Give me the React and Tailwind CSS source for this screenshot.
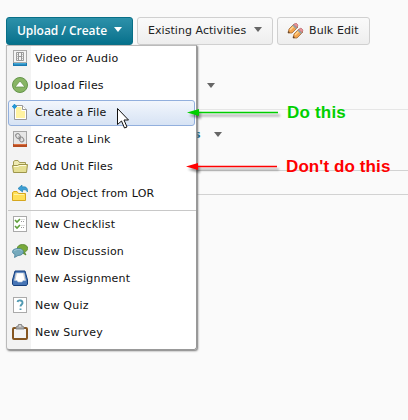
import React from "react";

function Caret({ className }) {
  return (
    <svg width="8" height="5" viewBox="0 0 8 5" className={className}>
      <path d="M0 0H8L4 5Z" fill="currentColor" />
    </svg>
  );
}

const icons = {
  video: (
    <>
      <rect x="1.5" y=".5" width="13" height="12" fill="#f5f5f5" stroke="#aaa" />
      <path d="M4.5 2.5H11.5V10.5H4.500ZM6.500 2.500V10.500M9.500 2.500V10.500M6.500 6.500H9.500" fill="none" stroke="#999" />
      <path d="M4 4.500H6M4 6.500H6M4 8.500H6M10 4.500H12M10 6.500H12M10 8.500H12" stroke="#aaa" strokeWidth=".7" />
      <path d="M1 13H15V16H1Z" fill="#1878b0" />
      <path d="M2 13H14V14.5H2Z" fill="#43a8d8" />
    </>
  ),
  upload: (
    <>
      <circle cx="8" cy="8" r="7.5" fill="#88b564" stroke="#64944a" />
      <path d="M8 4L13 10H3Z" fill="#fff" stroke="#5f8d43" strokeWidth=".7" />
    </>
  ),
  file: (
    <>
      <path d="M2.500 1.500H10.500L14.500 5.500V15.500H2.500Z" fill="#fff" stroke="#999" />
      <path d="M4 3H9.500V7H13V14H4Z" fill="#fff3a2" />
      <path d="M10.500 1.500V5.500H14.500" fill="#fff" stroke="#999" />
      <path d="M2.500 0V5M0 2.500H5M1 1L4 4M4 1L1 4" stroke="#2696d5" strokeWidth="1.100" />
    </>
  ),
  link: (
    <>
      <rect x="1.500" y=".500" width="13" height="13" fill="#e6e6e6" stroke="#a5a5a5" />
      <g fill="none" stroke="#8f8f8f" strokeWidth="1.100">
        <rect x="4" y="2.500" width="4" height="5" rx="2" transform="rotate(-35 6 5)" />
        <rect x="7.500" y="6" width="4" height="5" rx="2" transform="rotate(-35 9.500 8.500)" />
        <path d="M6.500 5.500L9 8.500" />
      </g>
      <path d="M1 13H15V16H1Z" fill="#b64c20" />
      <path d="M2 13H14V14H2Z" fill="#dc7142" />
    </>
  ),
  folder: (
    <>
      <path d="M1.500 13.500V3.500L3 2.500H6L7.500 4.500H13.500V7.500" fill="#eeeab2" stroke="#a39b55" />
      <path d="M.500 7.500H5.500L7 6.500H15.500L14.500 14.500H1.500Z" fill="#e5df92" stroke="#9d954b" />
      <path d="M2 8.500H6L7.500 7.500H14" stroke="#fffce0" fill="none" />
    </>
  ),
  object: (
    <>
      <path d="M.500 15.500V7.500L2 6.500H5L6.500 8.500H13.500V15.500Z" fill="#ffdf58" stroke="#d6a71e" />
      <path d="M2 9.500H12" stroke="#fff3a5" />
      <path d="M6 3.500L10 0V2C14 1 16 3 15.500 7C14 4.500 13 4.500 10.500 5V7Z" fill="#3d9fd4" stroke="#1478ae" strokeWidth=".6" />
    </>
  ),
  checklist: (
    <>
      <rect x="1.500" y=".500" width="13" height="15" fill="#fff" stroke="#aaa" />
      <path d="M3 4L5 6L8 3M3 10L5 12L8 9" fill="none" stroke="#609f3b" strokeWidth="1.600" />
      <path d="M9 5.500H13M9 11.500H13" stroke="#999" strokeDasharray="1 1" />
      <path d="M9 3.500H13M9 9.500H13" stroke="#ddd" />
    </>
  ),
  discussion: (
    <>
      <path d="M12.500 9L14 12L9.500 9.500C3.500 8.500 4 1.500 10.500 1.500C17 1.500 17 8 12.500 9Z" fill="#78a83a" stroke="#51832a" strokeWidth=".8" />
      <path d="M3 11.500L2.500 14.500L6 12.500C13 12.500 13 5.500 6.500 5.500C0 5.500-1.500 9.500 3 11.500Z" fill="#76aabd" stroke="#467f98" strokeWidth=".8" />
      <path d="M2 8C4 6 9 6 10.500 8" stroke="#a1c9d7" fill="none" />
    </>
  ),
  assignment: (
    <>
      <path d="M3 1H13L15.500 10V14L14.500 15.500H1.500L.500 14V10Z" fill="#4775b6" stroke="#153f7c" />
      <path d="M4 3H12L13.500 10.500H11L10 12H6L5 10.500H2.500Z" fill="#fff" stroke="#b9c9dc" strokeWidth=".6" />
      <path d="M4.500 3L3 10M11.500 3L13 10" stroke="#ccc" />
    </>
  ),
  quiz: (
    <>
      <rect x="1.500" y=".500" width="13" height="15" fill="#fff" stroke="#aaa" />
      <path d="M5.500 5C6 2.500 11 3 10.500 6C10.300 7.500 8.500 7.500 8.500 9.500M8.500 11.500V13" fill="none" stroke="#519ab2" strokeWidth="1.900" />
    </>
  ),
  survey: (
    <>
      <rect x="1" y="4" width="14" height="11" rx="1" fill="#f4f4f4" stroke="#865620" strokeWidth="2" />
      <path d="M4 5V3L6 2L6.500 .500H9.500L10 2L12 3V5Z" fill="#aaa" stroke="#777" strokeWidth=".8" />
      <circle cx="8" cy="2" r=".8" fill="#fff" />
    </>
  ),
};

const groupOne = [
  ["video", "Video or Audio"],
  ["upload", "Upload Files"],
  ["file", "Create a File"],
  ["link", "Create a Link"],
  ["folder", "Add Unit Files"],
  ["object", "Add Object from LOR"],
];
const groupTwo = [
  ["checklist", "New Checklist"],
  ["discussion", "New Discussion"],
  ["assignment", "New Assignment"],
  ["quiz", "New Quiz"],
  ["survey", "New Survey"],
];

function MenuItem({ icon, label, active }) {
  return (
    <li className={`flex h-[27px] pt-[4px] pl-[5px] ${active ? "relative before:absolute before:top-0 before:left-px before:h-[26px] before:w-[187px] before:rounded-[3px] before:border before:border-[#92afdd] before:bg-linear-to-b before:from-[#f2f6fc] before:to-[#d7e3f4]" : ""}`}>
      <svg width="16" height="16" viewBox="0 0 16 16" className="relative shrink-0">{icons[icon]}</svg>
      <span className="relative ml-[7px] leading-[17px] whitespace-nowrap tracking-[0.22px]">{label}</span>
    </li>
  );
}

function Pencils() {
  return (
    <svg width="17" height="17" viewBox="0 0 17 17" className="shrink-0">
      {["translate(0 0)", "translate(5 5)"].map((t) => (
        <g key={t} transform={t}>
          <path d="M1 10L2 6L7 1L11 4L5 10Z" fill="#f4a44d" stroke="#a16a38" strokeWidth=".8" />
          <path d="M3 7L8 2" stroke="#ffd690" strokeWidth="1.400" />
          <path d="M6.500 1.500L9 0L11 2L10 4.500Z" fill="#e99297" stroke="#b76a70" strokeWidth=".7" />
          <path d="M6 2L9.500 5.500" stroke="#8d9eaa" strokeWidth="1.600" />
          <path d="M1 10L1.500 8L3 9.500Z" fill="#493626" />
        </g>
      ))}
    </svg>
  );
}

function Arrow({ color, className }) {
  return (
    <svg width="98" height="16" viewBox="0 0 98 16" className={`drop-shadow-[2px_3px_1px_rgba(0,0,0,0.4)] ${className}`}>
      <path d="M9 4.500H91" stroke={color} strokeWidth="1.600" />
      <path d="M0 4.500L12 1V8Z" fill={color} />
    </svg>
  );
}

export default function App() {
  return (
    <div className="relative h-[420px] w-[408px] overflow-hidden bg-[#fafafa] font-['DejaVu_Sans',sans-serif] text-[11px] text-[#222]">
      <div className="flex gap-1 pt-[17px] pl-[6px]">
        <button className="flex h-7 w-[127px] items-center rounded-[3px] border border-[#086f87] bg-linear-to-b from-[#2c91aa] to-[#04718c] pl-[10px] font-['Open_Sans',sans-serif] text-[12px] font-semibold text-white">
          <span className="w-[97px] text-left leading-[16px] whitespace-nowrap tracking-[-0.04px]">Upload / Create</span>
          <Caret className="mb-[3px]" />
        </button>
        <button className="flex h-7 w-[136px] items-center rounded-[3px] border border-[#d0d0d0] bg-linear-to-b from-[#fafafa] to-[#eee] pl-[10px]">
          <span className="w-[106px] text-left leading-[16px] whitespace-nowrap tracking-[0.05px]">Existing Activities</span>
          <Caret className="mb-[3px] text-[#666]" />
        </button>
        <button className="flex h-7 w-[93px] items-center gap-[5px] rounded-[3px] border border-[#d0d0d0] bg-linear-to-b from-[#fafafa] to-[#eee] pl-[9px]">
          <Pencils />
          <span className="leading-[16px] whitespace-nowrap tracking-[0.1px]">Bulk Edit</span>
        </button>
      </div>

      <main className="pl-[190px]">
        <div className="flex h-[65px] items-center border-b border-[#e6e6e6] pt-[17px] pl-[17px] text-[#666]"><Caret /></div>
        <div className="flex h-[61px] items-start border-b border-[#d2d2d2] pt-[17px] pl-[4px]">
          <b className="w-[20px] text-[#176783]">s</b>
          <Caret className="mt-[5px] text-[#666]" />
        </div>
        <div className="h-[24px] border-b border-[#d2d2d2]" />
      </main>

      <nav className="absolute top-[45px] left-[6px] h-[305px] w-[191px] rounded-b-[3px] border border-[#bbb] border-r-[#999] border-b-[#999] bg-linear-to-r from-[#f3f3f3] from-[24px] to-white to-[24px] text-[#111] shadow-[1px_1px_2px_#777]">
        <ul>
          {groupOne.map(([icon, label]) => <MenuItem key={icon} icon={icon} label={label} active={icon === "file"} />)}
        </ul>
        <hr className="mt-[2px] mb-px ml-px border-[#c8c8c8]" />
        <ul>
          {groupTwo.map(([icon, label]) => <MenuItem key={icon} icon={icon} label={label} />)}
        </ul>
      </nav>

      <Arrow color="#00ce00" className="absolute top-[108px] left-[187px]" />
      <Arrow color="#f00" className="absolute top-[162px] left-[186px]" />
      <span className="absolute top-[102px] left-[287px] font-['Liberation_Sans',sans-serif] text-[17px] leading-[22px] font-bold whitespace-nowrap tracking-[0.2px] text-[#00d000]">Do this</span>
      <span className="absolute top-[156px] left-[286px] font-['Liberation_Sans',sans-serif] text-[17px] leading-[22px] font-bold whitespace-nowrap tracking-[0.1px] text-[#f00]">Don't do this</span>

      <svg width="13" height="21" viewBox="0 0 13 21" className="absolute top-[108px] left-[117px]">
        <path d="M.500 .500V16.500L4.500 13L7.500 20L10 19L7 12H11.500Z" fill="#fff" stroke="#111" />
      </svg>
    </div>
  );
}
